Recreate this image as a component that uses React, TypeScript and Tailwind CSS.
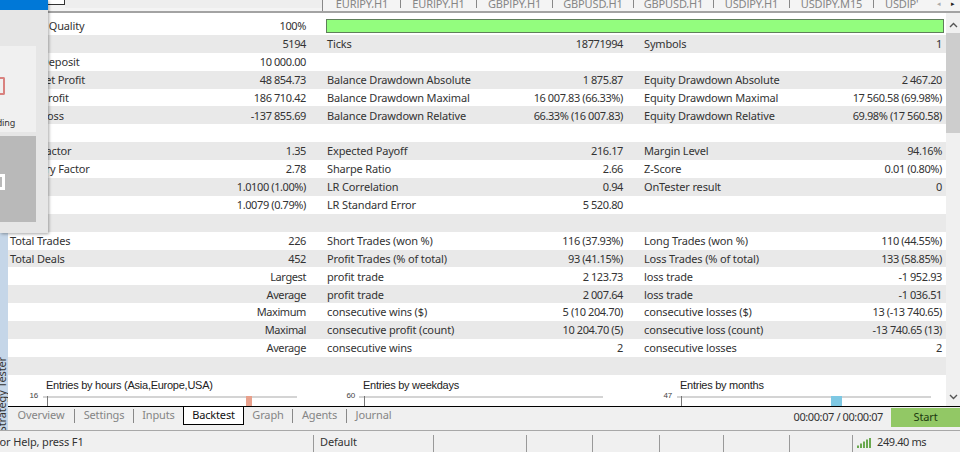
const rows: (string[] | null)[] = [
  ['History Quality', '100%', '', '', '', ''],
  ['Bars', '5194', 'Ticks', '18771994', 'Symbols', '1'],
  ['Initial Deposit', '10 000.00', '', '', '', ''],
  ['Total Net Profit', '48 854.73', 'Balance Drawdown Absolute', '1 875.87', 'Equity Drawdown Absolute', '2 467.20'],
  ['Gross Profit', '186 710.42', 'Balance Drawdown Maximal', '16 007.83 (66.33%)', 'Equity Drawdown Maximal', '17 560.58 (69.98%)'],
  ['Gross Loss', '-137 855.69', 'Balance Drawdown Relative', '66.33% (16 007.83)', 'Equity Drawdown Relative', '69.98% (17 560.58)'],
  null,
  ['Profit Factor', '1.35', 'Expected Payoff', '216.17', 'Margin Level', '94.16%'],
  ['Recovery Factor', '2.78', 'Sharpe Ratio', '2.66', 'Z-Score', '0.01 (0.80%)'],
  ['AHPR', '1.0100 (1.00%)', 'LR Correlation', '0.94', 'OnTester result', '0'],
  ['GHPR', '1.0079 (0.79%)', 'LR Standard Error', '5 520.80', '', ''],
  null,
  ['Total Trades', '226', 'Short Trades (won %)', '116 (37.93%)', 'Long Trades (won %)', '110 (44.55%)'],
  ['Total Deals', '452', 'Profit Trades (% of total)', '93 (41.15%)', 'Loss Trades (% of total)', '133 (58.85%)'],
  ['', 'Largest', 'profit trade', '2 123.73', 'loss trade', '-1 952.93'],
  ['', 'Average', 'profit trade', '2 007.64', 'loss trade', '-1 036.51'],
  ['', 'Maximum', 'consecutive wins ($)', '5 (10 204.70)', 'consecutive losses ($)', '13 (-13 740.65)'],
  ['', 'Maximal', 'consecutive profit (count)', '10 204.70 (5)', 'consecutive loss (count)', '-13 740.65 (13)'],
  ['', 'Average', 'consecutive wins', '2', 'consecutive losses', '2'],
  null,
]

const topTabs = [
  { label: 'EURJPY,H1', w: 'w-[77px]' },
  { label: 'EURJPY,H1', w: 'w-[76px]' },
  { label: 'GBPJPY,H1', w: 'w-[76px]' },
  { label: 'GBPUSD,H1', w: 'w-[81px]' },
  { label: 'GBPUSD,H1', w: 'w-[80px]' },
  { label: 'USDJPY,H1', w: 'w-[76px]' },
  { label: 'USDJPY,M15', w: 'w-[84px]' },
]
const statusCells = ['w-[120px]', 'w-[93px]', 'w-[66px]', 'w-[67px]', 'w-[64px]', 'w-[66px]', 'w-[63px]']

function Pair({ label, value, wide }: { label: string; value: string; wide?: boolean }) {
  return (
    <div className={`flex justify-between whitespace-nowrap ${wide ? 'w-[298px]' : 'w-[296px]'}`}>
      <span className="tracking-[-0.15px]">{label}</span>
      <span className="tracking-[-0.4px]">{value}</span>
    </div>
  )
}

function Chart({ title, max, line, tick, bar }: { title: string; max: string; line: string; tick: string; bar?: string }) {
  return (
    <div className="relative w-[317px] shrink-0">
      <div className="pl-[38px] mt-[4px] text-[11px] tracking-[-0.26px] leading-[13px] text-[#222] font-['Liberation_Sans',sans-serif] whitespace-nowrap">
        {title}
      </div>
      <div className="absolute left-[20px] w-[10px] top-[17px] text-right text-[8px] leading-[8px] text-[#444] font-['Liberation_Sans',sans-serif]">
        {max}
      </div>
      <div className={`absolute top-[21px] h-[2px] bg-[#d4d4d4] ${line}`} />
      <div className={`absolute top-[21px] w-[1px] h-[10px] bg-[#777] ${tick}`} />
      {bar && <div className={`absolute top-[21px] h-[10px] ${bar}`} />}
    </div>
  )
}

function BottomTab({ label, active, last, w }: { label: string; active?: boolean; last?: boolean; w: string }) {
  if (active) {
    return (
      <div className={`h-[18px] bg-white border-x border-b border-black text-[#111] flex items-center justify-center ${w}`}>
        {label}
      </div>
    )
  }
  return (
    <div className={`flex items-center text-[#858585] ${w}`}>
      <span className="flex-1 text-center">{label}</span>
      {!last && <span className="w-[1px] h-[14px] bg-[#888]" />}
    </div>
  )
}

export default function App() {
  return (
    <div className="relative w-[960px] h-[452px] overflow-hidden bg-[#f0f0f0] text-[11px] tracking-[-0.15px] text-[#333] font-['Noto_Sans',sans-serif]">
      {/* Top symbol tabs, cut by the window edge */}
      <div className="h-[13px] flex items-start border-b-2 border-[#a3a3a3] bg-[#f4f4f4]">
        <div className="w-[65px] h-[5px] bg-white border-r border-b border-[#333]" />
        <div className="w-[258px] h-[11px] border-r border-[#888]">
          <div className="h-[8px] bg-[#eeeeee]" />
        </div>
        <div className="flex-1 h-[8px] pl-[1px] flex items-center text-[#868686] overflow-hidden">
          {topTabs.map((t, i) => (
            <span key={i} className={`flex items-center whitespace-nowrap ${t.w}`}>
              <span className="flex-1 text-center">{t.label}</span>
              <span className="w-[1px] h-[8px] bg-[#888]" />
            </span>
          ))}
          <span className="ml-[11px] whitespace-nowrap">USDJP'</span>
          <span className="ml-auto text-[7px] text-[#aaa]">◂</span>
          <span className="ml-[10px] mr-[5px] text-[7px] text-[#222]">▸</span>
        </div>
      </div>

      <div className="flex h-[417px]">
        {/* Collapsed side strip */}
        <div className="w-[8px] shrink-0 bg-[#c5d6e8] relative overflow-hidden">
          <span className="absolute left-[-5px] bottom-[-2px] [writing-mode:vertical-rl] rotate-180 text-[11px] leading-[14px] whitespace-nowrap text-[#333]">
            Strategy Tester
          </span>
        </div>

        <div className="flex-1 flex flex-col min-w-0">
          <div className="flex h-[393px] bg-white">
            <div className="w-[938px] pt-[4px]">
              {rows.map((r, i) => (
                <div
                  key={i}
                  className={`relative flex items-center h-[17.9px] pl-[2px] gap-x-[21px] pt-[1px] ${i % 2 ? 'bg-[#e9e9e9]' : 'bg-white'}`}
                >
                  {r && (
                    <>
                      <Pair label={r[0]} value={r[1]} />
                      <Pair label={r[2]} value={r[3]} />
                      <Pair label={r[4]} value={r[5]} wide />
                    </>
                  )}
                  {i === 0 && (
                    <div className="absolute left-[318px] top-[2px] w-[618px] h-[14px] bg-[#93fd7e] border border-[#5f7f5a]" />
                  )}
                </div>
              ))}
              <div className="flex">
                <Chart
                  title="Entries by hours (Asia,Europe,USA)"
                  max="16"
                  line="left-[35px] w-[254px]"
                  tick="left-[39px]"
                  bar="left-[238px] w-[6px] bg-[#e8a08c]"
                />
                <Chart title="Entries by weekdays" max="60" line="left-[34px] w-[244px]" tick="left-[39px]" />
                <Chart
                  title="Entries by months"
                  max="47"
                  line="left-[35px] w-[254px]"
                  tick="left-[39px]"
                  bar="left-[189px] w-[11px] bg-[#7ec8e3]"
                />
              </div>
            </div>
            <div className="w-[14px] flex flex-col items-center bg-[#f0f0f0] text-[#555]">
              <svg className="w-[9px] h-[6px] mt-[9px] mb-[5px]" viewBox="0 0 9 6" fill="none" stroke="currentColor" strokeWidth="1.4">
                <path d="M1 5l3.5-3.5L8 5" />
              </svg>
              <div className="w-full h-[100px] bg-[#cdcdcd]" />
              <svg className="w-[9px] h-[6px] mt-auto mb-[6px]" viewBox="0 0 9 6" fill="none" stroke="currentColor" strokeWidth="1.4">
                <path d="M1 1l3.5 3.5L8 1" />
              </svg>
            </div>
          </div>

          {/* Tester tabs */}
          <div className="flex items-start h-[24px] border-t border-black bg-[#f0f0f0]">
            <div className="flex items-center h-[17px]">
              <BottomTab label="Overview" w="w-[67px]" />
              <BottomTab label="Settings" w="w-[59px]" />
              <BottomTab label="Inputs" w="w-[49px]" last />
              <BottomTab label="Backtest" active w="w-[61px]" />
              <BottomTab label="Graph" w="w-[49px]" />
              <BottomTab label="Agents" w="w-[54px]" />
              <BottomTab label="Journal" w="w-[53px]" last />
            </div>
            <span className="ml-auto mr-[8px] h-[20px] flex items-center tracking-[-0.4px] text-[#333]">00:00:07 / 00:00:07</span>
            <div className="w-[69px] h-[19px] mt-[1px] bg-[#92c865] flex items-center justify-center text-[#1c3a10]">Start</div>
          </div>
        </div>
      </div>

      {/* Status bar */}
      <div className="flex items-end h-[22px] border-t border-[#a8a8a8] bg-[#f0f0f0] text-[#333]">
        <div className="w-[313px] overflow-hidden whitespace-nowrap h-[17px] pb-[2px] flex items-center">
          <span className="-ml-[6px]">For Help, press F1</span>
        </div>
        {statusCells.map((w, i) => (
          <div key={i} className={`${w} h-[17px] pb-[2px] border-l border-[#999] flex items-center pl-[6px] shrink-0`}>
            {i === 0 ? 'Default' : ''}
          </div>
        ))}
        <div className="flex-1 h-[17px] pb-[2px] border-l border-[#999] flex items-center pl-[4px] gap-[6px]">
          <svg className="w-[14px] h-[10px]" viewBox="0 0 14 10" fill="#6aa84f">
            <rect x="0" y="7.5" width="2" height="2.5" />
            <rect x="3" y="5.5" width="2" height="4.5" />
            <rect x="6" y="3.5" width="2" height="6.5" />
            <rect x="9" y="1.5" width="2" height="8.5" />
            <rect x="12" y="0" width="2" height="10" />
          </svg>
          <span className="tracking-[-0.4px]">249.40 ms</span>
        </div>
      </div>

      {/* Window lying over the report */}
      <div className="absolute left-0 top-0 w-[48px] h-[233px] bg-[#e6e6e6] shadow-[1px_1px_3px_rgba(0,0,0,0.35)] flex flex-col">
        <div className="h-[10px] bg-[#0078d7]" />
        <div className="flex flex-col gap-[4px] w-[36px] mt-[36px]">
          <div className="h-[86px] bg-[#f0f0f0] flex flex-col">
            <div className="w-[5px] h-[18px] mt-[31px] border-2 border-l-0 border-[#d9827f] rounded-r-[2px]" />
            <span className="mt-[22px] -ml-[16px] text-[9px] leading-[12px] text-[#333] whitespace-nowrap">Trading</span>
          </div>
          <div className="h-[86px] bg-[#b9b9b9]">
            <div className="w-[5px] h-[16px] mt-[38px] border-[3px] border-l-0 border-white" />
          </div>
        </div>
      </div>
    </div>
  )
}
